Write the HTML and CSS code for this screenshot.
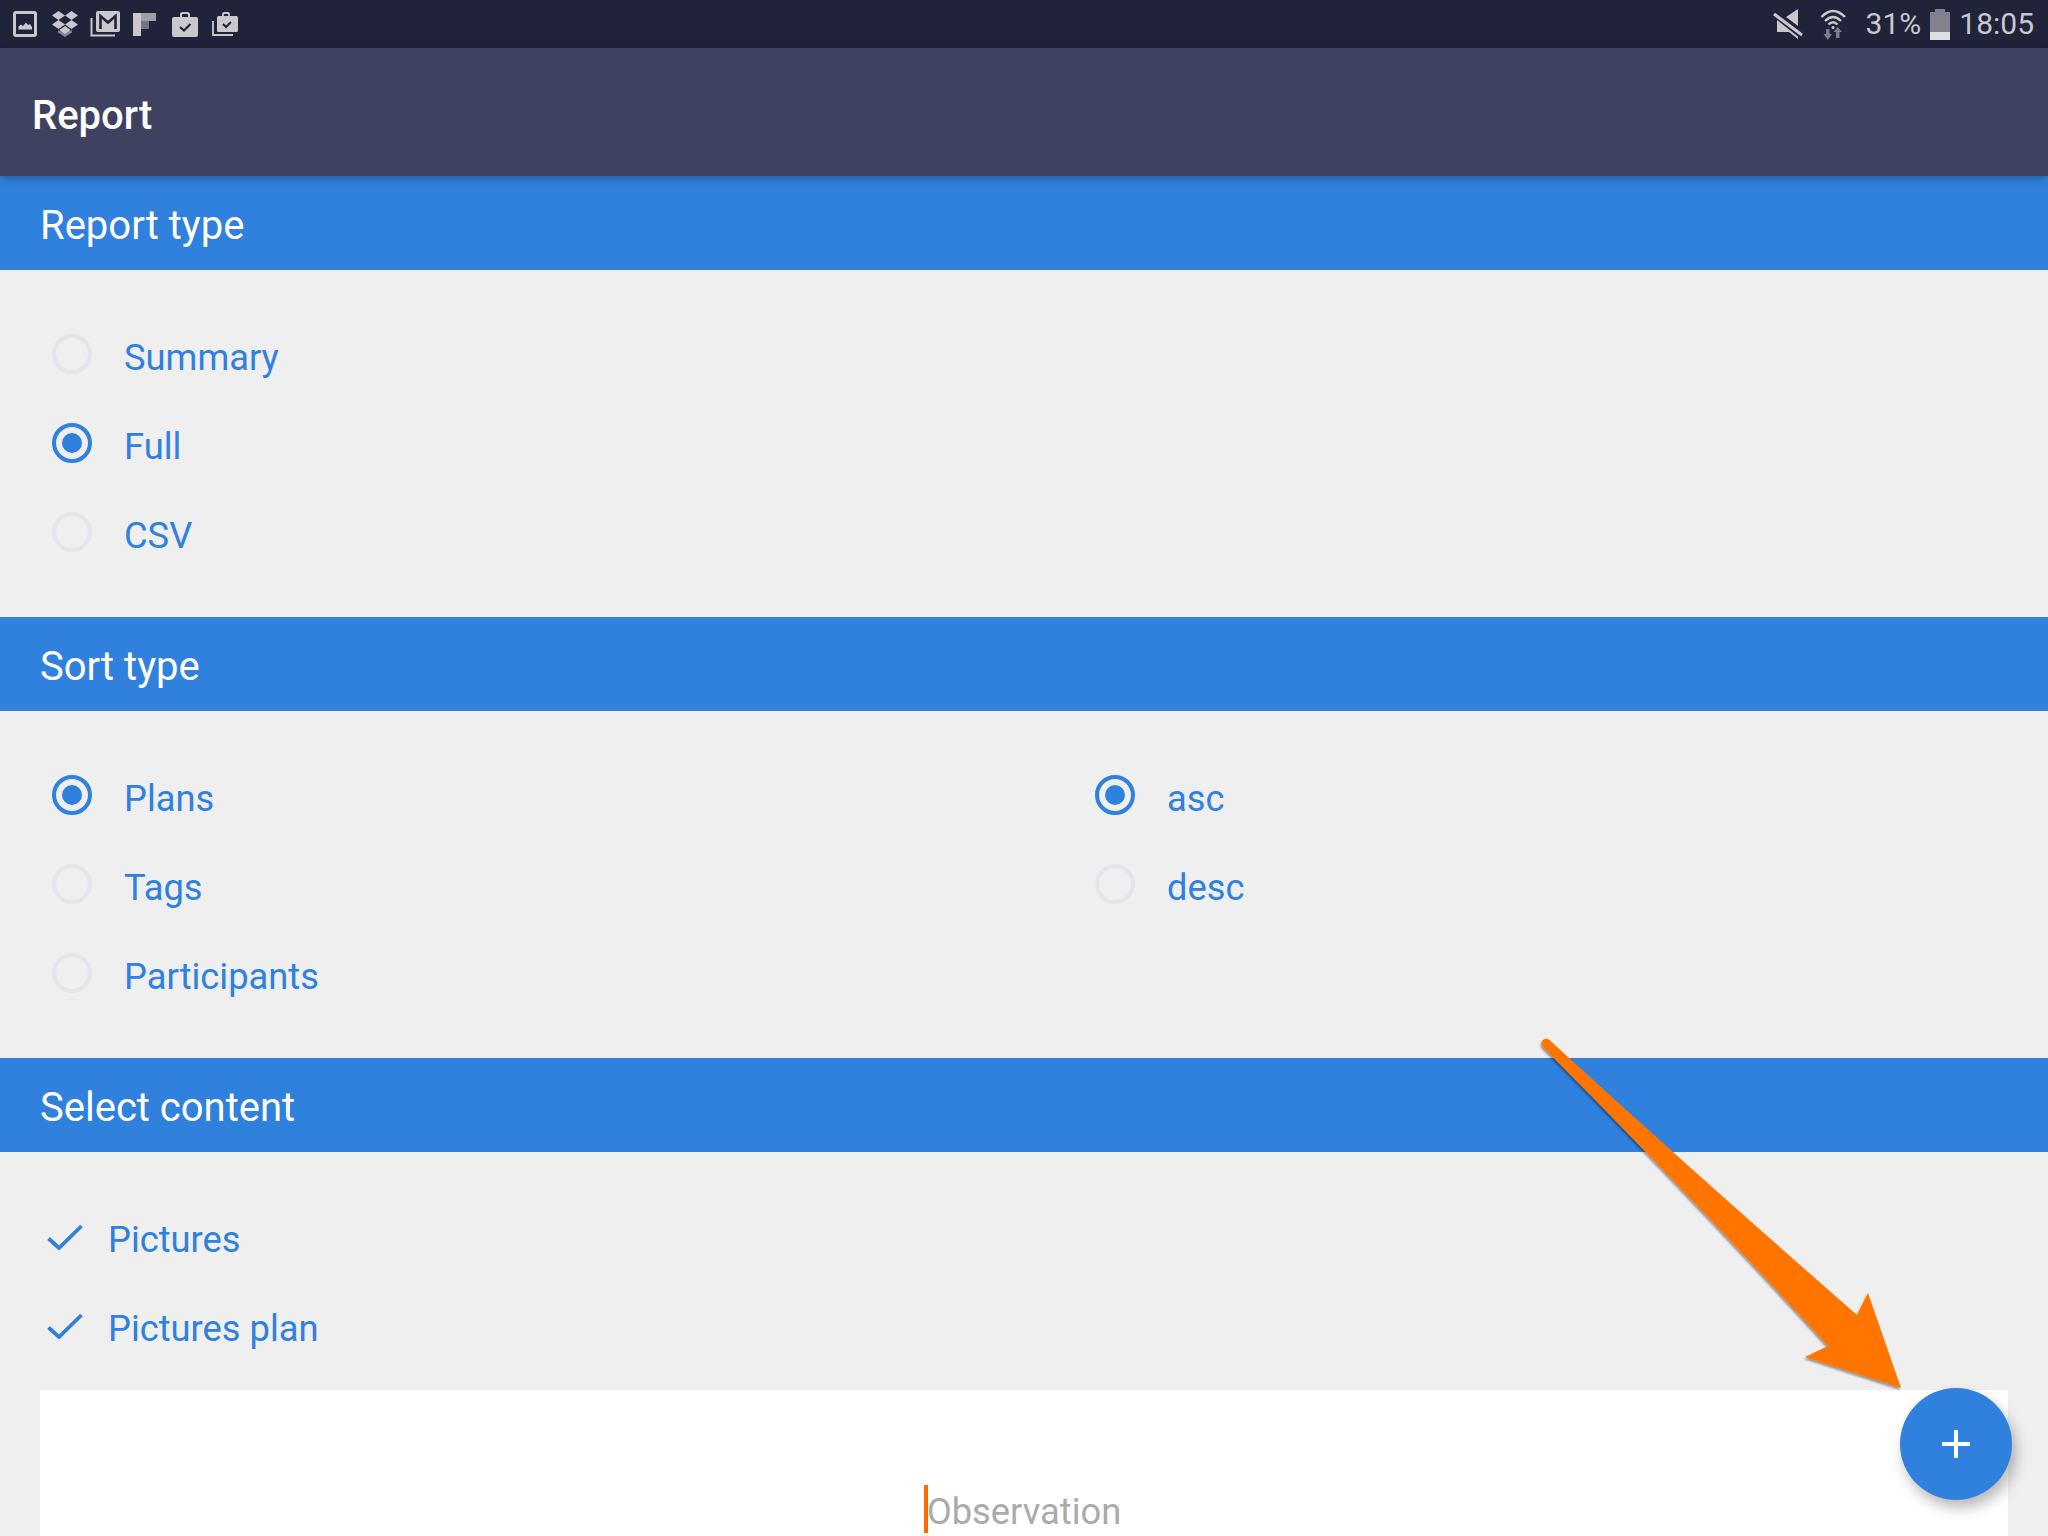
FILE: index.html
```html
<!DOCTYPE html>
<html lang="en">
<head>
<meta charset="utf-8">
<title>Report</title>
<link rel="stylesheet" href="styles.css">
</head>
<body>
<div class="screen">
  <header class="status">
    <div class="status-left">
      <svg class="si si-pic" viewBox="0 0 24 26"><rect x="1.500" y="1.500" width="21" height="23" rx="1.500" fill="none" stroke="currentColor" stroke-width="3"/><path d="M5.500 18.500v-3l2.500-2 2 1.500 3-3.500 2 2.500 2-1 2 3v2.500z" fill="currentColor"/></svg>
      <svg class="si si-drop" viewBox="0 0 28 26"><path fill="currentColor" d="M7.500 0 14 4.500 7.500 9 1 4.500zM20.500 0 27 4.500 20.500 9 14 4.500zM7.500 9 14 13.500 7.500 18 1 13.500zM20.500 9 27 13.500 20.500 18 14 13.500zM14 15l5.500 4-5.500 4-5.500-4z"/><path fill="currentColor" opacity=".6" d="M7 19.500l1 .5 6-4 6 4 1-.5v2l-7 4.500-7-4.500z"/></svg>
      <svg class="si si-mail" viewBox="0 0 30 26"><path d="M1.500 7v17.500H25" fill="none" stroke="currentColor" stroke-width="2"/><rect x="6" y="0" width="24" height="21" rx="2" fill="currentColor"/><path d="M10.500 18V5l7.500 6.500L25.500 5v13" fill="none" stroke="#20233a" stroke-width="2.600"/></svg>
      <svg class="si si-flip" viewBox="0 0 23 23"><rect x="0" y="0" width="8" height="23" fill="currentColor"/><rect x="8" y="0" width="15" height="8" fill="currentColor" opacity=".75"/><rect x="8" y="8" width="8" height="8" fill="currentColor" opacity=".5"/></svg>
      <svg class="si si-bag" viewBox="0 0 26 25"><path fill="none" stroke="currentColor" stroke-width="2" d="M9 6V2.500q0-1.500 1.500-1.500h5q1.500 0 1.500 1.500V6"/><rect x="0" y="5" width="26" height="20" rx="2" fill="currentColor"/><path d="M8 15l4 3.500 6.500-6.500" fill="none" stroke="#20233a" stroke-width="2.200"/></svg>
      <svg class="si si-bag2" viewBox="0 0 26 24"><path fill="none" stroke="currentColor" stroke-width="1.800" d="M1 9v14h20"/><path fill="none" stroke="currentColor" stroke-width="1.800" d="M11 5V2q0-1 1-1h4q1 0 1 1v3"/><rect x="5" y="4" width="21" height="16" rx="1.500" fill="currentColor"/><path d="M11 12l3 3 5-5" fill="none" stroke="#20233a" stroke-width="2"/></svg>
    </div>
    <div class="status-right">
      <svg class="si si-mute" viewBox="1773 8 31 32"><path fill="currentColor" d="M1787 17l12-8v17zM1778 20l21 16.500v2.500l-9-7h-12z"/><path d="M1775 14l28 21" stroke="currentColor" stroke-width="3" fill="none"/></svg>
      <svg class="si si-wifi" viewBox="1820 8 28 32"><path d="M1822.500 17Q1834 5 1846 17M1826 21Q1834 13 1842 21M1829.500 24.500Q1834 20 1838.500 24.500" fill="none" stroke="currentColor" stroke-width="2.400"/><circle cx="1834" cy="27.500" r="1.600" fill="currentColor"/><path fill="currentColor" opacity=".55" d="M1827 29h3.500v5h2.500l-4.200 6-4.300-6h2.500zM1837 38v-6h-2.500l4.200-5 4.300 5h-2.500v6z"/></svg>
      <span class="pct">31%</span>
      <div class="battery"><div class="battery-cap"></div><div class="battery-body"><div class="battery-fill"></div></div></div>
      <span class="clock">18:05</span>
    </div>
  </header>

  <div class="appbar">Report</div>

  <section>
    <h2 class="bar">Report type</h2>
    <div class="body">
      <div class="col">
        <label class="row"><span class="radio"></span><span class="lbl">Summary</span></label>
        <label class="row"><span class="radio on"></span><span class="lbl">Full</span></label>
        <label class="row"><span class="radio"></span><span class="lbl">CSV</span></label>
      </div>
    </div>
  </section>

  <section>
    <h2 class="bar">Sort type</h2>
    <div class="body two">
      <div class="col">
        <label class="row"><span class="radio on"></span><span class="lbl">Plans</span></label>
        <label class="row"><span class="radio"></span><span class="lbl">Tags</span></label>
        <label class="row"><span class="radio"></span><span class="lbl">Participants</span></label>
      </div>
      <div class="col">
        <label class="row"><span class="radio on"></span><span class="lbl">asc</span></label>
        <label class="row"><span class="radio"></span><span class="lbl">desc</span></label>
      </div>
    </div>
  </section>

  <section>
    <h2 class="bar">Select content</h2>
    <div class="checks">
      <label class="row check"><svg class="tick" viewBox="0 0 36 26"><path d="M1.500 14.500 12 24 34.500 2" fill="none" stroke="currentColor" stroke-width="3.800"/></svg><span class="lbl">Pictures</span></label>
      <label class="row check"><svg class="tick" viewBox="0 0 36 26"><path d="M1.500 14.500 12 24 34.500 2" fill="none" stroke="currentColor" stroke-width="3.800"/></svg><span class="lbl">Pictures plan</span></label>
    </div>
    <div class="card"><div class="field"><span class="caret"></span><span class="ph">Observation</span></div></div>
  </section>

  <button class="fab" aria-label="Add"><svg viewBox="0 0 28 28" class="plus"><path d="M14 0v28M0 14h28" stroke="#fff" stroke-width="4"/></svg></button>

  <svg class="arrow" viewBox="0 0 2048 1536">
    <defs><filter id="ds" x="-5%" y="-5%" width="110%" height="110%"><feDropShadow dx="-1" dy="2" stdDeviation="1.200" flood-color="#000" flood-opacity=".4"/></filter></defs>
    <path filter="url(#ds)" fill="#ff7500" d="M1549.500 1040Q1680 1160 1857 1315L1868 1293 1901 1388 1805 1357 1828 1346Q1690 1195 1543 1047Q1540 1043 1543 1040Q1546 1037 1549.500 1040Z"/>
  </svg>
</div>
</body>
</html>
```
FILE: styles.css
```css
* { box-sizing: border-box; }
html, body { margin: 0; padding: 0; }
body { background: #efefef; font-family: Roboto, "Liberation Sans", sans-serif; }
.screen { position: relative; width: 2048px; height: 1536px; overflow: hidden; background: #efefef; }

.status { height: 48px; background: #20233a; color: #c8c8cd; display: flex; justify-content: space-between; align-items: center; padding: 0 14px 0 13px; }
.status-left, .status-right { display: flex; align-items: center; }
.si { display: block; flex: none; }
.si-pic { width: 24px; height: 26px; margin-right: 14px; }
.si-drop { width: 28px; height: 26px; margin-right: 11px; }
.si-mail { width: 30px; height: 26px; margin-right: 13px; }
.si-flip { width: 23px; height: 23px; margin-right: 16px; }
.si-bag { width: 26px; height: 25px; margin-right: 14px; }
.si-bag2 { width: 26px; height: 24px; }
.si-mute { width: 31px; height: 32px; margin-right: 16px; }
.si-wifi { width: 28px; height: 32px; margin-right: 19px; }
.pct, .clock { font-size: 30px; line-height: 48px; color: #c8c8cd; }
.pct { margin-right: 9px; }
.battery { width: 20px; height: 31px; display: flex; flex-direction: column; align-items: center; margin-right: 9px; }
.battery-cap { width: 10px; height: 3px; background: #81828d; flex: none; }
.battery-body { flex: 1; width: 20px; background: #81828d; display: flex; align-items: flex-end; }
.battery-fill { width: 100%; height: 8px; background: #dfdfe4; }

.appbar { position: relative; z-index: 1; height: 128px; background: #3e4160; color: #fff; font-size: 40px; font-weight: 500; line-height: 120px; padding: 8px 0 0 32px; box-shadow: 0 2px 8px rgba(0, 0, 0, .3); }

.bar { margin: 0; height: 94px; background: #3080de; color: #fff; font-size: 40px; font-weight: 400; line-height: 88px; padding: 6px 0 0 40px; }

.body { padding: 39px 0 41px 52px; }
.two { display: grid; grid-template-columns: 1043px 1fr; }
.col { display: flex; flex-direction: column; }
.row { display: flex; align-items: center; height: 89px; color: #3080de; font-size: 36.3px; }
.radio { flex: none; position: relative; width: 40px; height: 40px; border: 4px solid #e2e5e9; border-radius: 50%; margin-right: 32px; }
.radio.on { border-color: #3080de; }
.radio.on::after { content: ""; position: absolute; left: 6px; top: 6px; width: 20px; height: 20px; border-radius: 50%; background: #3080de; }
.lbl { position: relative; top: 4px; }

.checks { padding: 40px 0 20px 47px; }
.tick { flex: none; width: 36px; height: 26px; margin-right: 25px; }
.check .lbl { top: 3px; }

.card { margin: 0 40px; height: 200px; background: #fff; padding-top: 95px; }
.field { display: flex; justify-content: center; align-items: center; color: #aaa; font-size: 36.3px; line-height: 48px; height: 48px; padding-right: 3px; }
.caret { width: 4px; height: 48px; background: #ff6a00; flex: none; margin-right: -1px; }
.ph { position: relative; top: 3px; }

.fab { position: absolute; left: 1900px; top: 1388px; width: 112px; height: 112px; padding: 0; border: 0; border-radius: 50%; background: #3080de; display: flex; align-items: center; justify-content: center; box-shadow: 4px 8px 14px rgba(0, 0, 0, .28); }
.plus { width: 28px; height: 28px; display: block; }

.arrow { position: absolute; left: 0; top: 0; width: 2048px; height: 1536px; pointer-events: none; }
```
